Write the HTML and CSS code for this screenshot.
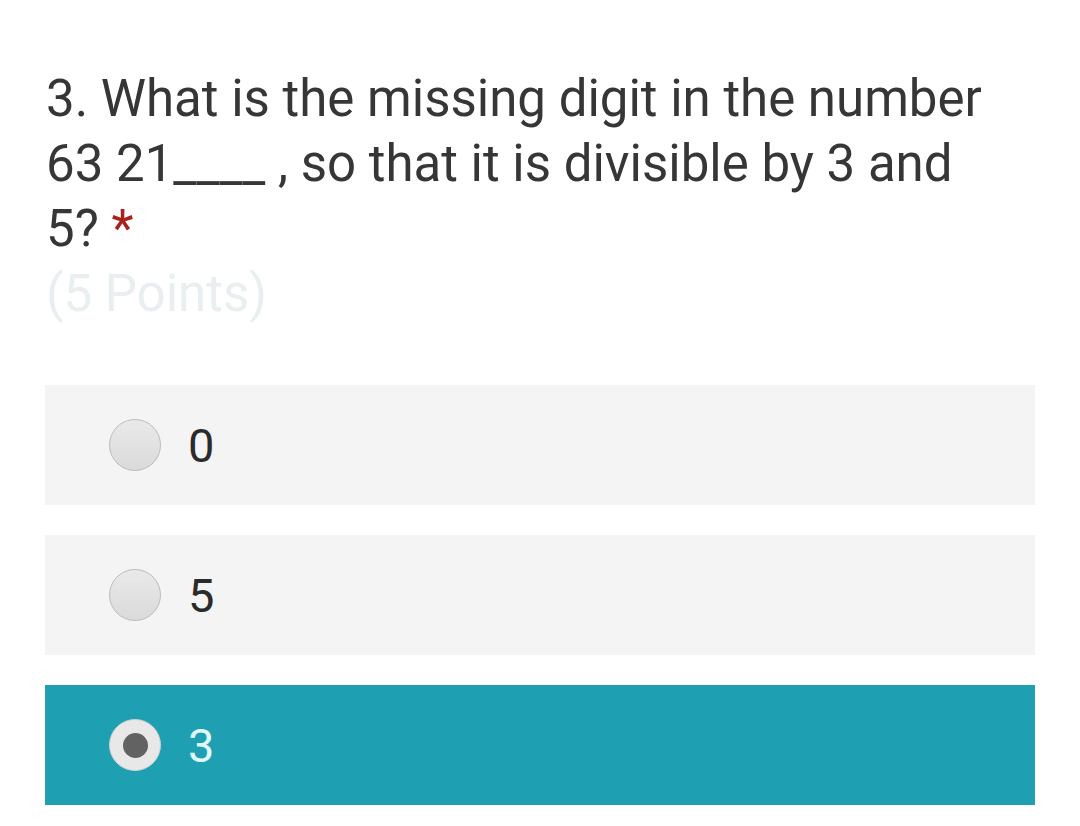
FILE: index.html
```html
<!DOCTYPE html>
<html>
<head>
<meta charset="utf-8">
<link rel="stylesheet" href="styles.css">
</head>
<body>
<div class="page">
  <div class="question">
    <div class="title">3. What is the missing digit in the number 63 21____ , so that it is divisible by 3 and 5? <span class="req">*</span></div>
    <div class="points">(5 Points)</div>
  </div>
  <div class="options">
    <div class="option"><span class="radio"></span><span class="label">0</span></div>
    <div class="option"><span class="radio"></span><span class="label">5</span></div>
    <div class="option selected"><span class="radio"><span class="dot"></span></span><span class="label">3</span></div>
  </div>
</div>
</body>
</html>
```
FILE: styles.css
```css
html, body {
  margin: 0;
  padding: 0;
  background: #ffffff;
}
.page {
  padding: 66px 45px 0 45px;
  font-family: Roboto, "Liberation Sans", sans-serif;
}
.question {
  font-size: 51px;
  line-height: 65px;
  color: #363636;
  padding-right: 45px;
}
.title {
  padding-left: 1px;
}
.req {
  color: #a8221c;
}
.points {
  color: #e9eff1;
  padding-left: 1px;
}
.options {
  margin-top: 59px;
  display: flex;
  flex-direction: column;
  gap: 30px;
}
.option {
  height: 120px;
  background: #f4f4f4;
  display: flex;
  align-items: center;
  padding-left: 64px;
}
.radio {
  width: 50px;
  height: 50px;
  border-radius: 50%;
  border: 1px solid #bcbcbc;
  background: linear-gradient(#e9e9e9, #dadada);
  display: flex;
  align-items: center;
  justify-content: center;
  flex-shrink: 0;
}
.label {
  margin-left: 27px;
  font-size: 47px;
  color: #2b2b2b;
}
.selected {
  background: #1ea0b2;
}
.selected .radio {
  border: 1px solid #d0d0d0;
  background: #e8e8e8;
}
.selected .label {
  color: #e2f9fc;
}
.dot {
  width: 25px;
  height: 25px;
  border-radius: 50%;
  background: #626262;
}
```
